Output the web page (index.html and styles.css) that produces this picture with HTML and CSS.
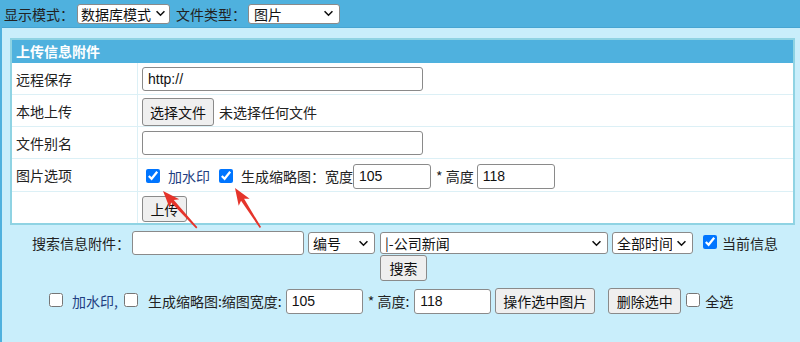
FILE: index.html
```html
<!DOCTYPE html>
<html>
<head>
<meta charset="utf-8">
<link rel="stylesheet" href="styles.css">
</head>
<body>
<div class="topbar">
  <span class="tlabel">显示模式：</span>
  <select class="sel sel-mode"><option>数据库模式</option></select>
  <span class="tlabel tlabel2">文件类型：</span>
  <select class="sel sel-type"><option>图片</option></select>
</div>

<div class="panel">
  <div class="phead">上传信息附件</div>
  <div class="row r1">
    <div class="label">远程保存</div>
    <div class="cell"><input class="txt wide" type="text" value="http://"></div>
  </div>
  <div class="row r2">
    <div class="label">本地上传</div>
    <div class="cell"><button class="btn btn-file">选择文件</button><span class="nofile">未选择任何文件</span></div>
  </div>
  <div class="row r3">
    <div class="label">文件别名</div>
    <div class="cell"><input class="txt wide" type="text"></div>
  </div>
  <div class="row r4">
    <div class="label">图片选项</div>
    <div class="cell">
      <input type="checkbox" class="cb" checked><span class="blue wm">加水印</span>
      <input type="checkbox" class="cb cb2" checked><span class="thumb">生成缩略图：宽度</span>
      <input class="txt num" type="text" value="105"><span class="star">* 高度</span>
      <input class="txt num" type="text" value="118">
    </div>
  </div>
  <div class="row r5">
    <div class="label"></div>
    <div class="cell"><button class="btn btn-up">上传</button></div>
  </div>
</div>

<div class="search">
  <span class="slabel">搜索信息附件：</span>
  <input class="txt skey" type="text">
  <select class="sel sel-no"><option>编号</option></select>
  <select class="sel sel-cat"><option>|-公司新闻</option></select>
  <select class="sel sel-time"><option>全部时间</option></select>
  <input type="checkbox" class="cb cb-cur" checked><span class="cur">当前信息</span>
</div>
<div class="search2"><button class="btn btn-search">搜索</button></div>

<div class="ops">
  <input type="checkbox" class="cb cb-o1"><span class="blue owm">加水印,</span>
  <input type="checkbox" class="cb cb-o2"><span class="othumb">生成缩略图:缩图宽度:</span>
  <input class="txt onum" type="text" value="105"><span class="ostar">* 高度:</span>
  <input class="txt onum" type="text" value="118">
  <button class="btn btn-op">操作选中图片</button>
  <button class="btn btn-del">删除选中</button>
  <input type="checkbox" class="cb cb-all"><span class="all">全选</span>
</div>

<svg class="arrows" width="800" height="342" viewBox="0 0 800 342">
  <g transform="translate(163 191) rotate(-42.5)">
    <polygon points="0,0 -6.5,17 -1.8,14 -0.8,50 0.8,50 1.8,14 6.5,17" fill="#e5342b"/>
  </g>
  <g transform="translate(235 188) rotate(-32.7)">
    <polygon points="0,0 -6.5,17 -1.8,14 -0.8,47 0.8,47 1.8,14 6.5,17" fill="#e5342b"/>
  </g>
</svg>
</body>
</html>
```

FILE: styles.css
```css
html, body {
  margin: 0;
  padding: 0;
}
body {
  position: relative;
  width: 798px;
  height: 342px;
  overflow: hidden;
  background: #c9eefb;
  border-left: 2px solid #4fb1de;
  font-family: "Noto Sans CJK SC", "Liberation Sans", sans-serif;
  font-size: 14px;
  color: #222;
}
.sel, .txt, .btn {
  font-family: "Liberation Sans", "Noto Sans CJK SC", sans-serif;
  font-size: 14px;
  color: #111;
  box-sizing: border-box;
  margin: 0;
}
.sel {
  -webkit-appearance: none;
  appearance: none;
  height: 21px;
  border: 1px solid #8a8a8a;
  border-radius: 3px;
  background-color: #fff;
  background-image: url("data:image/svg+xml;utf8,<svg xmlns='http://www.w3.org/2000/svg' width='12' height='8' viewBox='0 0 12 8'><path d='M1.5 1.5 L6 6 L10.5 1.5' fill='none' stroke='%23111' stroke-width='1.8'/></svg>");
  background-repeat: no-repeat;
  background-position: right 5px center;
  background-size: 11px 7px;
  padding: 0 0 0 4px;
  font-family: "Noto Sans CJK SC", sans-serif;
  line-height: 18px;
}
.txt {
  border: 1px solid #8a8a8a;
  border-radius: 3px;
  background: #fff;
  padding: 1px 5px;
  height: 24px;
}
.btn {
  font-family: "Noto Sans CJK SC", sans-serif;
  background: #efefef;
  border: 1px solid #8a8a8a;
  border-radius: 3px;
  padding: 0 6px;
  height: 26px;
}
.cb {
  margin: 0;
  width: 14px;
  height: 14px;
}

.topbar {
  height: 27px;
  background: #4fb1de;
  border-bottom: 1px solid #47a5d2;
  display: flex;
  align-items: center;
  padding-left: 4px;
  margin-left: -2px;
}
.tlabel { color: #222; line-height: 20px; }
.sel-mode { width: 93px; height: 20px; margin-left: 3px; padding-left: 3px; background-position: right 3px center; }
.tlabel2 { margin-left: 6px; }
.sel-type { width: 92px; height: 20px; margin-left: 2px; padding-left: 5px; }

.panel {
  margin: 10px 5px 0 8px;
  border: 2px solid #8fd3e3;
  background: #fff;
}
.phead {
  height: 23px;
  background: #4fb1de;
  color: #fff;
  font-weight: bold;
  line-height: 23px;
  padding-left: 4px;
}
.row {
  display: grid;
  grid-template-columns: 126px 1fr;
  border-bottom: 1px solid #dcf0f6;
}
.row.r5 { border-bottom: none; }
.r1 { height: 31px; }
.r2 { height: 31px; }
.r3 { height: 31px; }
.r4 { height: 32px; }
.r5 { height: 31px; }
.label {
  box-sizing: border-box;
  border-right: 1px solid #dcf0f6;
  padding-left: 4px;
  display: flex;
  align-items: center;
  color: #222;
}
.cell {
  display: flex;
  align-items: center;
  padding-left: 4px;
}
.wide { width: 281px; height: 24px; }
.btn-file { width: 72px; height: 28px; margin-top: 2px; }
.nofile { margin-left: 5px; margin-top: 2px; }
.r4 .cell { padding-top: 2px; }
.r4 .cb { margin-left: 4px; }
.wm { margin-left: 8px; }
.blue { color: #1f3f82; }
.r4 .cb2 { margin-left: 9px; }
.thumb { margin-left: 8px; }
.num { width: 78px; height: 25px; }
.star { margin: 0 3px 0 5px; }
.btn-up { width: 45px; height: 26px; margin-top: 3px; }

.search {
  display: flex;
  align-items: center;
  margin-top: 6px;
  padding-left: 30px;
  height: 24px;
}
.slabel { width: 98px; }
.skey { width: 172px; height: 24px; margin-left: 2px; }
.sel-no { width: 67px; height: 22px; margin-left: 4px; }
.sel-cat { width: 228px; height: 22px; margin-left: 5px; }
.sel-time { width: 81px; height: 22px; margin-left: 4px; padding-right: 20px; }
.cb-cur { margin-left: 10px; margin-top: -3px; }
.cur { margin-left: 5px; }
.search2 {
  padding-left: 378px;
  height: 26px;
}
.btn-search { width: 47px; height: 26px; }

.ops {
  display: flex;
  align-items: center;
  margin-top: 7px;
  padding-left: 47px;
  height: 26px;
}
.cb-o1 { margin-top: -3px; }
.owm { margin-left: 9px; }
.cb-o2 { margin-left: 6px; margin-top: -3px; }
.othumb { margin-left: 10px; }
.onum { width: 77px; height: 25px; margin-left: 4px; }
.ostar { margin-left: 5px; margin-right: 1px; }
.btn-op { width: 100px; height: 26px; margin-left: 4px; }
.btn-del { width: 73px; height: 26px; margin-left: 13px; }
.cb-all { margin-left: 5px; margin-top: -3px; }
.all { margin-left: 5px; }

.arrows {
  position: absolute;
  left: -2px;
  top: 0;
  pointer-events: none;
}
```
